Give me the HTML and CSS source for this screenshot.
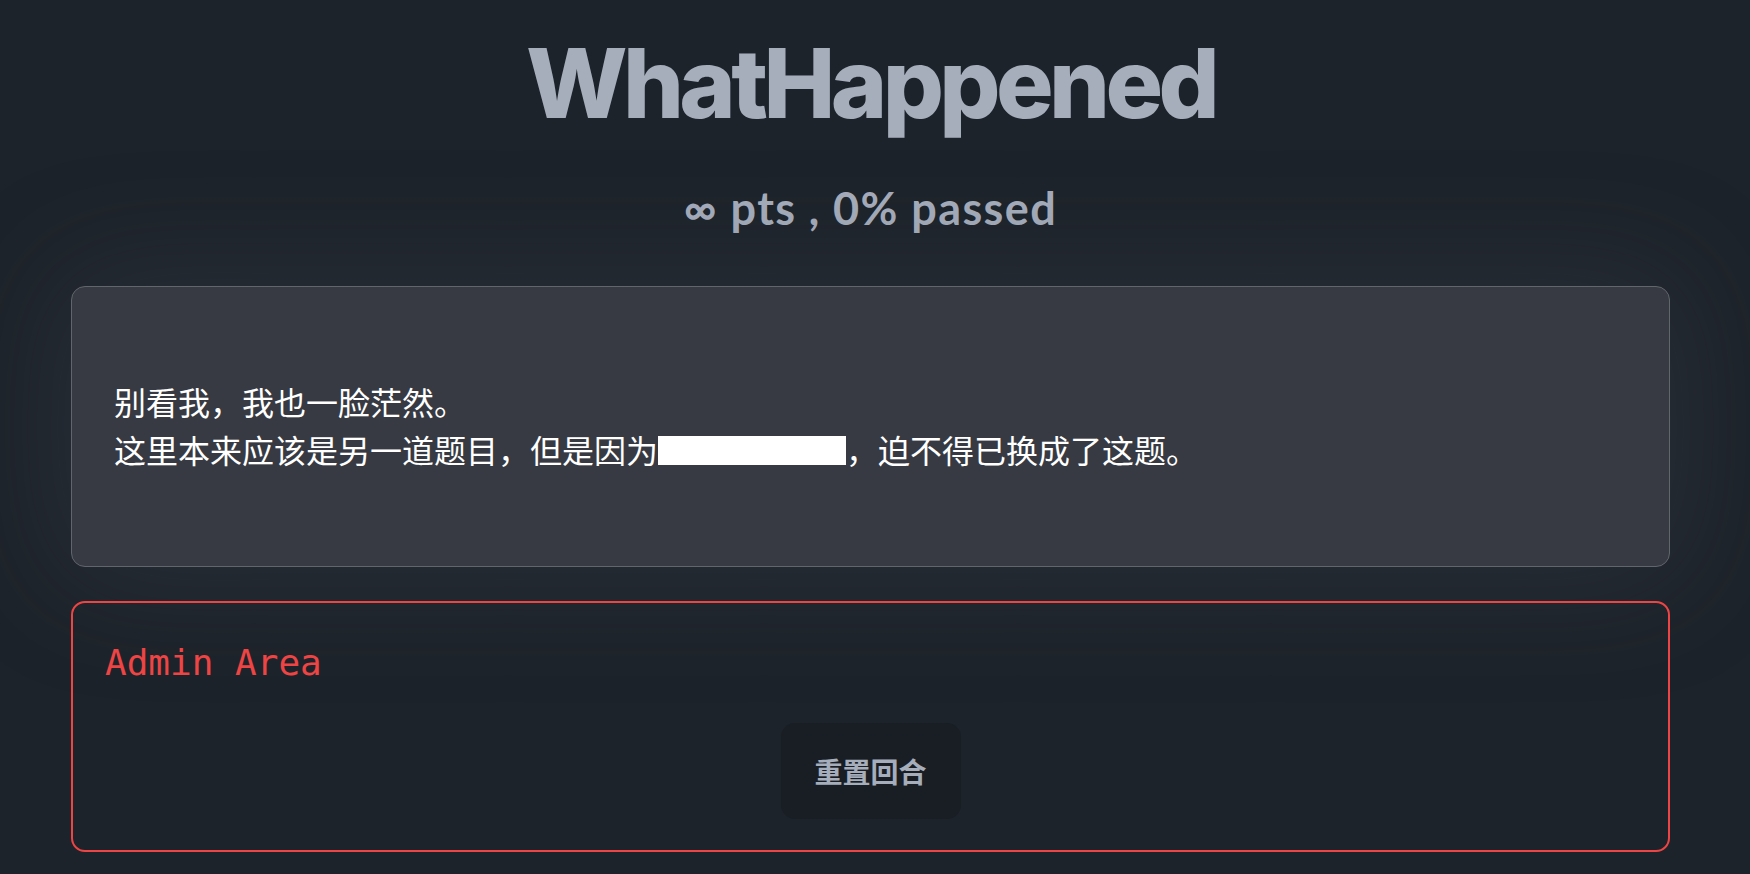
FILE: index.html
```html
<!DOCTYPE html>
<html lang="zh-CN">
<head>
<meta charset="utf-8">
<title>WhatHappened</title>
<link rel="stylesheet" href="styles.css">
</head>
<body>
<main class="page">
  <h1 class="title">WhatHappened</h1>
  <p class="score">∞ pts , 0% passed</p>
  <section class="card">
    <p class="card-text">别看我，我也一脸茫然。<br>这里本来应该是另一道题目，但是因为<span class="redacted"></span>，迫不得已换成了这题。</p>
  </section>
  <section class="admin">
    <h2 class="admin-title">Admin Area</h2>
    <div class="admin-actions">
      <button class="btn" type="button">重置回合</button>
    </div>
  </section>
</main>
</body>
</html>
```
FILE: styles.css
```css
html, body {
  margin: 0;
  padding: 0;
}
body {
  background: #1d232a;
  min-height: 100vh;
  overflow: hidden;
  font-family: "Noto Sans CJK SC", "Noto Sans", sans-serif;
}
.page {
  padding: 35px 80px 0 71px;
  display: flex;
  flex-direction: column;
}
.title {
  margin: 0;
  text-align: center;
  font-family: Inter, "Liberation Sans", sans-serif;
  font-weight: 800;
  font-size: 96px;
  line-height: 96px;
  letter-spacing: -0.048em;
  color: #a6adbb;
}
.score {
  margin: 55px 0 56px;
  text-align: center;
  font-family: Lato, "Open Sans", sans-serif;
  font-weight: 700;
  font-size: 45px;
  line-height: 44px;
  letter-spacing: 1.4px;
  color: #a6adbb;
}
.card {
  background: #373a42;
  border: 1px solid #61656c;
  border-radius: 14px;
  padding: 90px 42px 93px;
  box-shadow: 0 0 120px 10px rgba(70, 76, 88, 0.3);
  position: relative;
  z-index: 1;
}
.card-text {
  margin: 0;
  font-family: "Noto Sans CJK SC", sans-serif;
  font-size: 32px;
  line-height: 48px;
  color: #ffffff;
}
.redacted {
  display: inline-block;
  width: 188px;
  height: 29px;
  background: #ffffff;
  vertical-align: -2px;
}
.admin {
  margin-top: 34px;
  border: 2px solid #ef4444;
  border-radius: 14px;
  padding: 40px 32px 31px;
  position: relative;
  z-index: 2;
}
.admin-title {
  margin: 0;
  font-family: "DejaVu Sans Mono", "Liberation Mono", monospace;
  font-weight: 400;
  font-size: 36px;
  line-height: 40px;
  color: #ef4444;
}
.admin-actions {
  margin-top: 40px;
  display: flex;
  justify-content: center;
}
.btn {
  width: 180px;
  height: 96px;
  border: none;
  border-radius: 14px;
  background: #191e24;
  color: #a6adbb;
  font-family: "Noto Sans CJK SC", sans-serif;
  font-weight: 700;
  font-size: 28px;
  padding: 0;
}
```
